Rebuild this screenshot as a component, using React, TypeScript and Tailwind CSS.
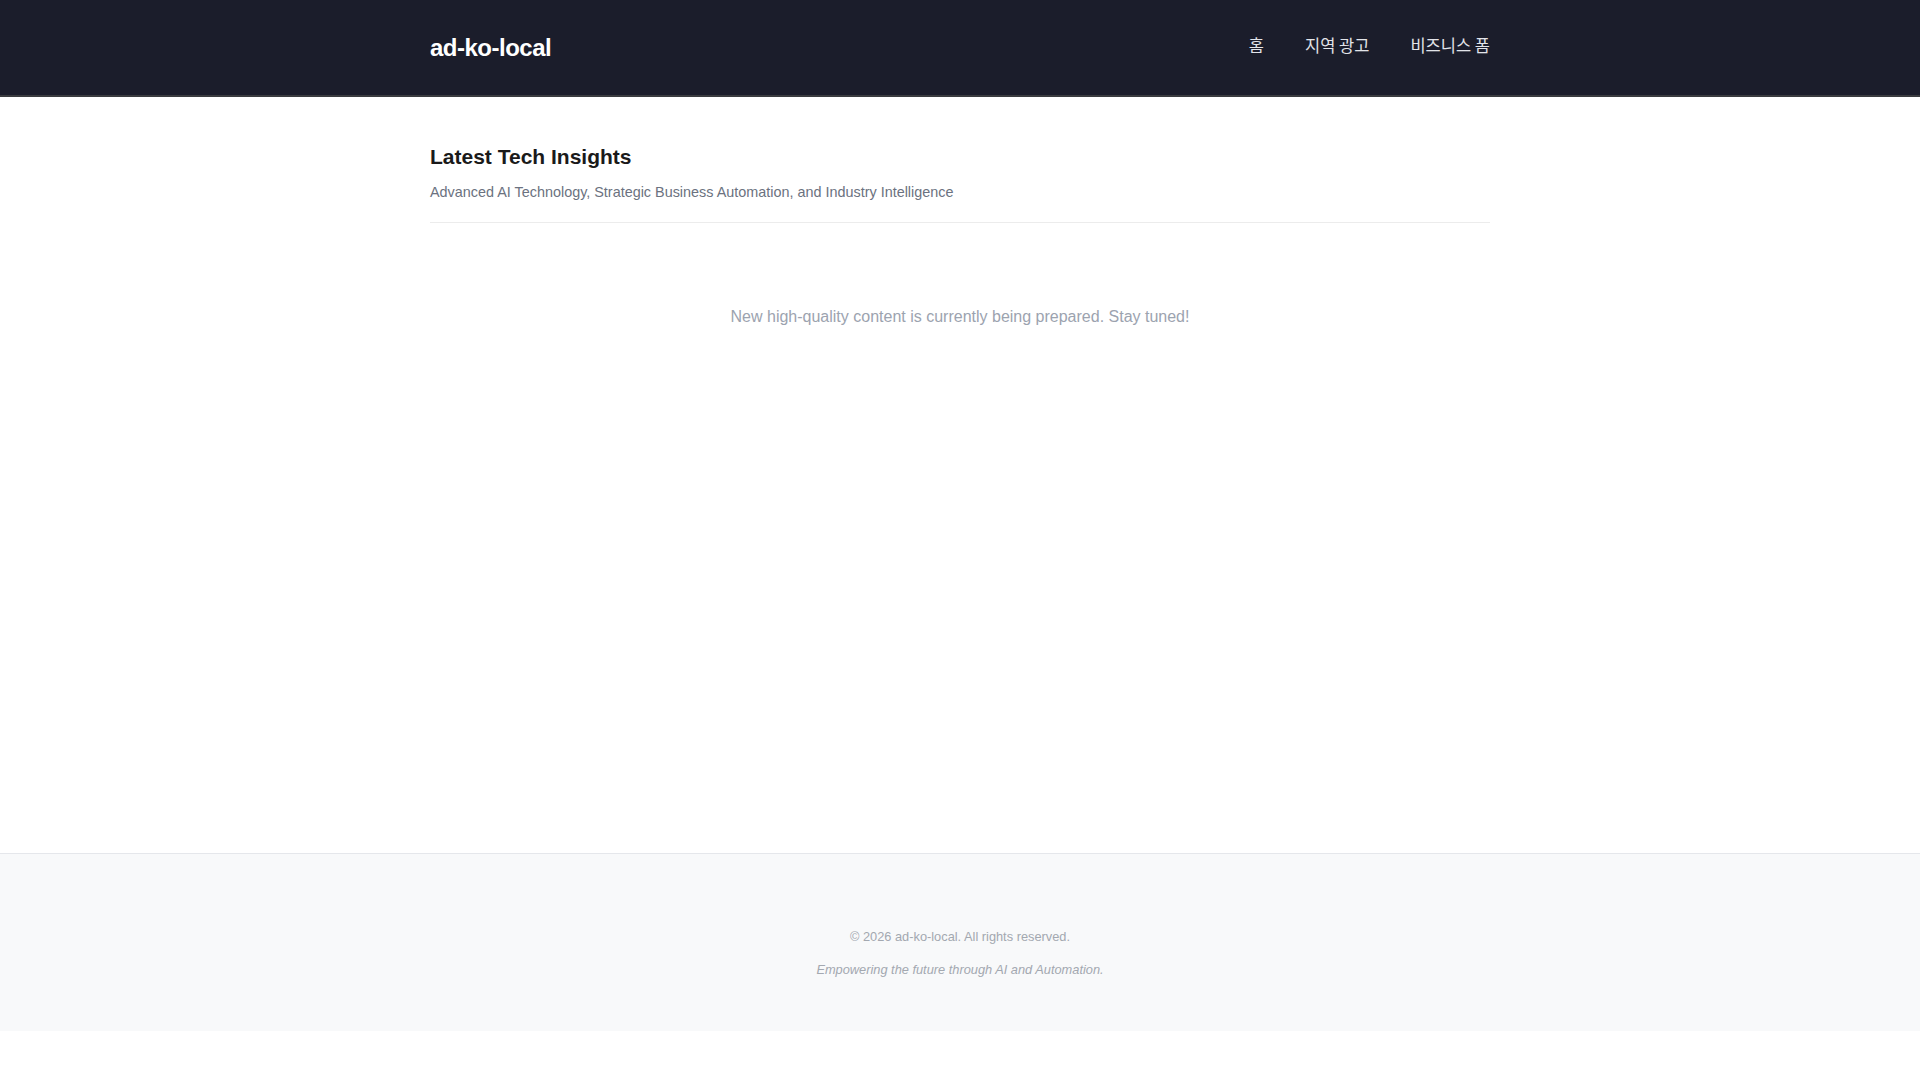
import React from 'react';

const navItems = ['홈', '지역 광고', '비즈니스 폼'];

export default function App() {
  return (
    <div className="bg-white font-['Liberation_Sans','Noto_Sans_CJK_KR',sans-serif]">
      {/* Header */}
      <header className="bg-[#1b1d2b] border-b-2 border-[#3a3b3f]">
        <div className="max-w-[1100px] mx-auto px-5 h-[95px] flex items-center justify-between">
          <a className="text-white text-[24px] font-bold tracking-[-0.5px]">ad-ko-local</a>
          <nav className="flex items-center gap-[41px] -mt-[4px]">
            {navItems.map(item => (
              <a
                key={item}
                className="text-[16.5px] text-[#e2e4e9] font-['Noto_Sans_CJK_KR','Liberation_Sans',sans-serif]"
              >
                {item}
              </a>
            ))}
          </nav>
        </div>
      </header>

      {/* Main */}
      <main className="min-h-[70vh]">
        <div className="max-w-[1100px] mx-auto px-5 pt-[47px]">
          <div className="pb-5 border-b border-[#ececec]">
            <h2 className="text-[21px] leading-[25px] font-bold text-[#1a1a1a]">Latest Tech Insights</h2>
            <p className="mt-[13px] text-[14.4px] leading-5 text-[#6b7280]">
              Advanced AI Technology, Strategic Business Automation, and Industry Intelligence
            </p>
          </div>
          <div className="pt-[82px] text-center">
            <p className="text-[16px] leading-6 text-[#9ca3af]">
              New high-quality content is currently being prepared. Stay tuned!
            </p>
          </div>
        </div>
      </main>

      {/* Footer */}
      <footer className="bg-[#f8f9fa] border-t border-[#e5e7eb] pt-[73px] pb-[51px] text-center">
        <p className="text-[12.8px] leading-5 text-[#a3a8b0]">© 2026 ad-ko-local. All rights reserved.</p>
        <p className="mt-[13px] text-[12.8px] leading-5 italic text-[#a3a8b0]">
          Empowering the future through AI and Automation.
        </p>
      </footer>
    </div>
  );
}
